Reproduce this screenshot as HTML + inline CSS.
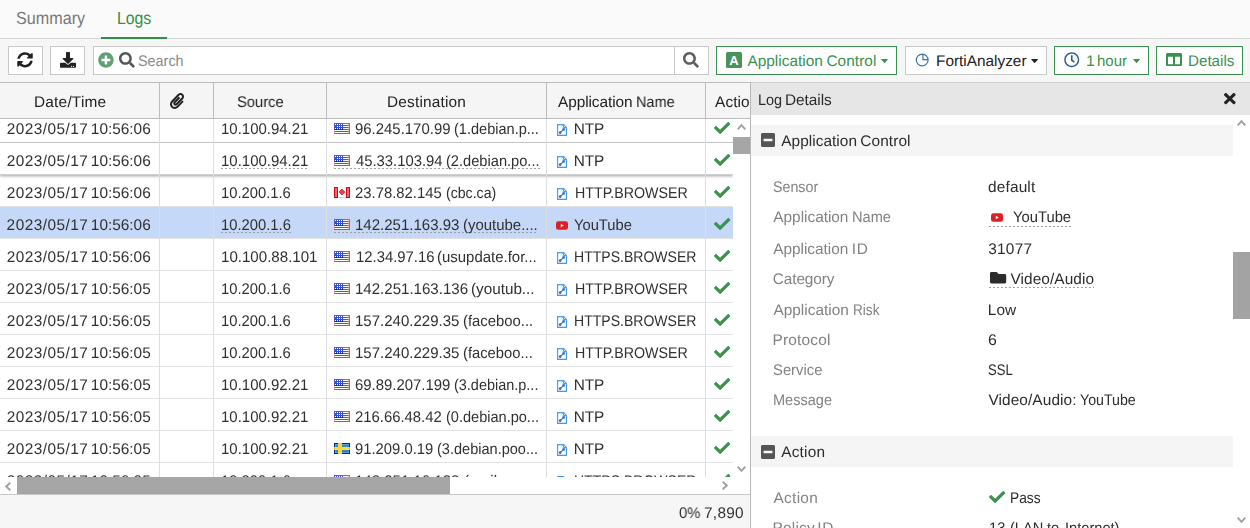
<!DOCTYPE html>
<html lang="en">
<head>
<meta charset="utf-8">
<title>Logs</title>
<style>
*{box-sizing:border-box;margin:0;padding:0}
html,body{width:1250px;height:528px;overflow:hidden}
body{background:#f6f6f6;font-family:"Liberation Sans",Arial,sans-serif;font-size:15.4px;text-rendering:geometricPrecision;color:#222;position:relative}
.abs{position:absolute}
.t{position:absolute;white-space:nowrap;line-height:20px;height:20px;transform-origin:0 0}
svg{display:block;overflow:visible}
/* tabs */
#tabbg{left:0;top:0;width:1250px;height:38px;background:#fafafa}
#tabline{left:0;top:38px;width:1250px;height:1px;background:#d4d4d4}
#tabul{left:101px;top:37px;width:66px;height:2px;background:#2f8f45}
.tab{font-size:17.5px}
/* toolbar */
.btn{position:absolute;top:46px;height:29px;background:#fff;border:1px solid #c8c8c8}
.btn.g{border-color:#3a9150}
.gr{color:#3a9150}
/* table */
#thead{left:0;top:82px;width:751px;height:37px;background:#f5f5f5;border-top:1px solid #bdbdbd;border-bottom:1px solid #bdbdbd}
.hsep{position:absolute;top:83px;width:1px;height:35px;background:#bdbdbd}
.gs{will-change:transform}
#tscroll{left:0;top:119px;width:750px;height:376px;background:#fff;border-bottom:1px solid #c9c9c9}
#tbody{left:0;top:119px;width:733px;height:358px;background:#fff;overflow:hidden;will-change:transform;color:#303030}
.row{position:absolute;left:0;width:733px;height:32px;border-bottom:1px solid #e1e1e1}
.row.sel{background:#c5d8f8}
.row.hov{box-shadow:0 -1px 0 #c6c6c6,0 1px 3px rgba(0,0,0,.38);z-index:4;background:#fff;border-bottom-color:#d0d0d0}
.vsep{position:absolute;top:0;width:1px;height:358px;background:#dedede;z-index:5}
.dl{position:absolute;height:1px;background:repeating-linear-gradient(90deg,#a0a0a0 0,#a0a0a0 2px,transparent 2px,transparent 4px)}
.sb{position:absolute;background:#a6a6a6}
/* panel */
#panel{left:750px;top:82px;width:500px;height:446px;background:#fff;border-left:1px solid #b8b8b8;overflow:hidden;will-change:transform;color:#2c2c2c}
#phead{left:0;top:0;width:500px;height:33px;background:#e6e6e6;border-top:1px solid #cfcfcf}
.sec{position:absolute;left:0;width:482px;height:31px;background:#f5f5f5}
.lbl{color:#828282}
</style>
</head>
<body>
<!-- tabs -->
<div class="abs" id="tabbg"></div>
<div class="abs" id="tabline"></div>
<div class="abs" id="tabul"></div>

<!-- toolbar -->
<div class="btn" style="left:8px;width:35px"></div>
<div class="btn" style="left:50px;width:35px"></div>
<div class="btn" style="left:93px;width:616px"></div>
<div class="abs" style="left:674px;top:47px;width:1px;height:27px;background:#c8c8c8"></div>
<div class="btn g" style="left:716px;width:181px"></div>
<div class="btn" style="left:905px;width:142px"></div>
<div class="btn g" style="left:1054px;width:95px"></div>
<div class="btn g" style="left:1156px;width:87px"></div>
<svg class="abs" style="left:17px;top:52.1px" width="16" height="15.7" viewBox="0 0 512 512" preserveAspectRatio="none"><path d="M370.72 133.28C339.458 104.008 298.888 87.962 255.848 88c-77.458.068-144.328 53.178-162.791 126.85-1.344 5.363-6.122 9.15-11.651 9.15H24.103c-7.498 0-13.194-6.807-11.807-14.176C33.933 94.924 134.813 8 256 8c66.448 0 126.791 26.136 171.315 68.685L463.03 40.97C478.149 25.851 504 36.559 504 57.941V192c0 13.255-10.745 24-24 24H345.941c-21.382 0-32.09-25.851-16.971-40.971l41.75-41.749zM32 296h134.059c21.382 0 32.09 25.851 16.971 40.971l-41.75 41.75c31.262 29.273 71.835 45.319 114.876 45.28 77.418-.07 144.315-53.144 162.787-126.849 1.344-5.363 6.122-9.15 11.651-9.15h57.304c7.498 0 13.194 6.807 11.807 14.176C478.067 417.076 377.187 504 256 504c-66.448 0-126.791-26.136-171.315-68.685L48.97 471.03C33.851 486.149 8 475.441 8 454.059V320c0-13.255 10.745-24 24-24z" fill="#222"/></svg>
<svg class="abs" style="left:60px;top:52.1px" width="16" height="15.8" viewBox="0 0 512 512" preserveAspectRatio="none"><path d="M216 0h80c13.3 0 24 10.7 24 24v168h87.7c17.8 0 26.7 21.5 14.1 34.1L269.7 378.3c-7.5 7.5-19.8 7.5-27.3 0L90.1 226.1c-12.6-12.6-3.7-34.1 14.1-34.1H192V24c0-13.3 10.7-24 24-24zm296 376v112c0 13.3-10.7 24-24 24H24c-13.3 0-24-10.7-24-24V376c0-13.3 10.7-24 24-24h146.7l49 49c20.1 20.1 52.5 20.1 72.6 0l49-49H488c13.3 0 24 10.7 24 24zm-124 88c0-11-9-20-20-20s-20 9-20 20 9 20 20 20 20-9 20-20zm64 0c0-11-9-20-20-20s-20 9-20 20 9 20 20 20 20-9 20-20z" fill="#222"/></svg>
<svg class="abs" style="left:98px;top:52px" width="15.9" height="15.9" viewBox="0 0 512 512" preserveAspectRatio="none"><path d="M256 8C119 8 8 119 8 256s111 248 248 248 248-111 248-248S393 8 256 8zm144 276c0 6.6-5.4 12-12 12h-92v92c0 6.6-5.4 12-12 12h-56c-6.6 0-12-5.4-12-12v-92h-92c-6.6 0-12-5.4-12-12v-56c0-6.6 5.4-12 12-12h92v-92c0-6.6 5.4-12 12-12h56c6.6 0 12 5.4 12 12v92h92c6.6 0 12 5.4 12 12v56z" fill="#5fa173"/></svg>
<svg class="abs" style="left:119.2px;top:52.1px" width="15.8" height="15.8" viewBox="0 0 512 512" preserveAspectRatio="none"><path d="M505 442.7L405.3 343c-4.5-4.5-10.6-7-17-7H372c27.6-35.3 44-79.7 44-128C416 93.1 322.9 0 208 0S0 93.1 0 208s93.1 208 208 208c48.3 0 92.7-16.4 128-44v16.3c0 6.4 2.5 12.5 7 17l99.7 99.7c9.4 9.4 24.6 9.4 33.9 0l28.3-28.3c9.4-9.4 9.4-24.6.1-34zM208 336c-70.7 0-128-57.2-128-128 0-70.7 57.2-128 128-128 70.7 0 128 57.2 128 128 0 70.7-57.2 128-128 128z" fill="#575757"/></svg>
<svg class="abs" style="left:683px;top:52.1px" width="15.9" height="15.8" viewBox="0 0 512 512" preserveAspectRatio="none"><path d="M505 442.7L405.3 343c-4.5-4.5-10.6-7-17-7H372c27.6-35.3 44-79.7 44-128C416 93.1 322.9 0 208 0S0 93.1 0 208s93.1 208 208 208c48.3 0 92.7-16.4 128-44v16.3c0 6.4 2.5 12.5 7 17l99.7 99.7c9.4 9.4 24.6 9.4 33.9 0l28.3-28.3c9.4-9.4 9.4-24.6.1-34zM208 336c-70.7 0-128-57.2-128-128 0-70.7 57.2-128 128-128 70.7 0 128 57.2 128 128 0 70.7-57.2 128-128 128z" fill="#5e5e5e"/></svg>
<div class="abs" style="left:726px;top:52px;width:16px;height:16px;background:#47935a;border-radius:1.5px"></div>
<span class="abs" style="left:726px;top:52px;width:16px;height:16px;line-height:17.5px;text-align:center;color:#fff;font-weight:bold;font-size:13px">A</span>
<svg class="abs" style="left:881.3px;top:59.2px" width="7" height="4" viewBox="0 0 10 6"><path d="M0.6 0 H9.4 Q10.3 0.3 9.7 1 L5.6 5.6 Q5 6.2 4.4 5.6 L0.3 1 Q-0.3 0.3 0.6 0 Z" fill="#3a9150"/></svg>
<svg class="abs" style="left:1031.4px;top:59.2px" width="7.2" height="4" viewBox="0 0 10 6"><path d="M0.6 0 H9.4 Q10.3 0.3 9.7 1 L5.6 5.6 Q5 6.2 4.4 5.6 L0.3 1 Q-0.3 0.3 0.6 0 Z" fill="#222"/></svg>
<svg class="abs" style="left:1133.2px;top:59.2px" width="7.2" height="4" viewBox="0 0 10 6"><path d="M0.6 0 H9.4 Q10.3 0.3 9.7 1 L5.6 5.6 Q5 6.2 4.4 5.6 L0.3 1 Q-0.3 0.3 0.6 0 Z" fill="#3a9150"/></svg>
<svg class="abs" style="left:915px;top:53px" width="14" height="14" viewBox="0 0 14 14"><g fill="none" stroke="#3572a5" stroke-width="1.15"><circle cx="7.2" cy="7" r="5.9"/><path d="M7.9 1.2 V6.6 H13"/></g></svg>
<svg class="abs" style="left:1064.1px;top:52.3px" width="15.5" height="15.4" viewBox="0 0 512 512" preserveAspectRatio="none"><path d="M256 8C119 8 8 119 8 256s111 248 248 248 248-111 248-248S393 8 256 8zm0 448c-110.5 0-200-89.5-200-200S145.5 56 256 56s200 89.5 200 200-89.5 200-200 200zm61.8-104.4l-84.9-61.7c-3.1-2.3-4.9-5.9-4.9-9.700V116c0-6.600 5.400-12 12-12h32c6.600 0 12 5.400 12 12v141.700l66.800 48.600c5.400 3.900 6.500 11.400 2.600 16.800L334.600 349c-3.900 5.300-11.400 6.500-16.800 2.600z" fill="#2a5d94"/></svg>
<svg class="abs" style="left:1166px;top:53.3px" width="16" height="13.1" viewBox="0 32 512 448" preserveAspectRatio="none"><path d="M464 32H48C21.49 32 0 53.49 0 80v352c0 26.51 21.49 48 48 48h416c26.51 0 48-21.49 48-48V80c0-26.51-21.49-48-48-48zM224 416H64V160h160v256zm224 0H288V160h160v256z" fill="#3a9150"/></svg>
<svg width="0" height="0" style="position:absolute" shape-rendering="crispEdges"><defs><symbol id="fus" viewBox="0 0 16 11"><rect x="0" y="0" width="9" height="1" fill="#5c5cb6"/><rect x="9" y="0" width="7" height="1" fill="#c9614b"/><rect x="0" y="1" width="1" height="1" fill="#5353b4"/><rect x="1" y="1" width="1" height="1" fill="#ffffff"/><rect x="2" y="1" width="1" height="1" fill="#4b57c9"/><rect x="3" y="1" width="1" height="1" fill="#ffffff"/><rect x="4" y="1" width="1" height="1" fill="#4b57c9"/><rect x="5" y="1" width="1" height="1" fill="#ffffff"/><rect x="6" y="1" width="1" height="1" fill="#4b57c9"/><rect x="7" y="1" width="1" height="1" fill="#ffffff"/><rect x="8" y="1" width="1" height="1" fill="#4b57c9"/><rect x="9" y="1" width="5" height="1" fill="#fdf3f3"/><rect x="14" y="1" width="1" height="1" fill="#f3c9c4"/><rect x="15" y="1" width="1" height="1" fill="#c9614b"/><rect x="0" y="2" width="1" height="1" fill="#5353b4"/><rect x="1" y="2" width="7" height="1" fill="#3f54cb"/><rect x="8" y="2" width="1" height="1" fill="#3a50c4"/><rect x="9" y="2" width="5" height="1" fill="#f2202e"/><rect x="14" y="2" width="1" height="1" fill="#ee6a6a"/><rect x="15" y="2" width="1" height="1" fill="#c9614b"/><rect x="0" y="3" width="1" height="1" fill="#5353b4"/><rect x="1" y="3" width="2" height="1" fill="#2f56d2"/><rect x="3" y="3" width="1" height="1" fill="#ffffff"/><rect x="4" y="3" width="1" height="1" fill="#2f56d2"/><rect x="5" y="3" width="1" height="1" fill="#ffffff"/><rect x="6" y="3" width="1" height="1" fill="#2f56d2"/><rect x="7" y="3" width="1" height="1" fill="#ffffff"/><rect x="8" y="3" width="1" height="1" fill="#2a4cc0"/><rect x="9" y="3" width="5" height="1" fill="#fdf3f3"/><rect x="14" y="3" width="1" height="1" fill="#f3c9c4"/><rect x="15" y="3" width="1" height="1" fill="#c9614b"/><rect x="0" y="4" width="1" height="1" fill="#5353b4"/><rect x="1" y="4" width="7" height="1" fill="#2450cd"/><rect x="8" y="4" width="1" height="1" fill="#1f45b8"/><rect x="9" y="4" width="5" height="1" fill="#f2202e"/><rect x="14" y="4" width="1" height="1" fill="#ee6a6a"/><rect x="15" y="4" width="1" height="1" fill="#c9614b"/><rect x="0" y="5" width="1" height="1" fill="#5353b4"/><rect x="1" y="5" width="1" height="1" fill="#ffffff"/><rect x="2" y="5" width="1" height="1" fill="#1847c6"/><rect x="3" y="5" width="1" height="1" fill="#ffffff"/><rect x="4" y="5" width="1" height="1" fill="#1847c6"/><rect x="5" y="5" width="1" height="1" fill="#ffffff"/><rect x="6" y="5" width="1" height="1" fill="#1847c6"/><rect x="7" y="5" width="1" height="1" fill="#ffffff"/><rect x="8" y="5" width="1" height="1" fill="#143cb0"/><rect x="9" y="5" width="5" height="1" fill="#fdf3f3"/><rect x="14" y="5" width="1" height="1" fill="#f3c9c4"/><rect x="15" y="5" width="1" height="1" fill="#c9614b"/><rect x="0" y="6" width="1" height="1" fill="#5353b4"/><rect x="1" y="6" width="7" height="1" fill="#123db9"/><rect x="8" y="6" width="1" height="1" fill="#1036a6"/><rect x="9" y="6" width="5" height="1" fill="#f2202e"/><rect x="14" y="6" width="1" height="1" fill="#ee6a6a"/><rect x="15" y="6" width="1" height="1" fill="#c9614b"/><rect x="0" y="7" width="1" height="1" fill="#f6b9b4"/><rect x="1" y="7" width="13" height="1" fill="#ffffff"/><rect x="14" y="7" width="1" height="1" fill="#f3c9c4"/><rect x="15" y="7" width="1" height="1" fill="#c9614b"/><rect x="0" y="8" width="1" height="1" fill="#ee6a6a"/><rect x="1" y="8" width="13" height="1" fill="#f2202e"/><rect x="14" y="8" width="1" height="1" fill="#ee6a6a"/><rect x="15" y="8" width="1" height="1" fill="#c9614b"/><rect x="0" y="9" width="1" height="1" fill="#f6b9b4"/><rect x="1" y="9" width="13" height="1" fill="#ffffff"/><rect x="14" y="9" width="1" height="1" fill="#f3c9c4"/><rect x="15" y="9" width="1" height="1" fill="#c9614b"/><rect x="0" y="10" width="16" height="1" fill="#c1533e"/></symbol><symbol id="fca" viewBox="0 0 16 11"><rect x="0" y="0" width="4" height="1" fill="#dc0714"/><rect x="4" y="0" width="8" height="1" fill="#f1f1f1"/><rect x="12" y="0" width="4" height="1" fill="#dc0714"/><rect x="0" y="1" width="1" height="1" fill="#dc0714"/><rect x="1" y="1" width="2" height="1" fill="#ec6a72"/><rect x="3" y="1" width="1" height="1" fill="#dc0714"/><rect x="4" y="1" width="8" height="1" fill="#ffffff"/><rect x="12" y="1" width="1" height="1" fill="#dc0714"/><rect x="13" y="1" width="2" height="1" fill="#ec6a72"/><rect x="15" y="1" width="1" height="1" fill="#dc0714"/><rect x="0" y="2" width="1" height="1" fill="#dc0714"/><rect x="1" y="2" width="2" height="1" fill="#ec6a72"/><rect x="3" y="2" width="1" height="1" fill="#dc0714"/><rect x="4" y="2" width="3" height="1" fill="#ffffff"/><rect x="7" y="2" width="2" height="1" fill="#e8414d"/><rect x="9" y="2" width="3" height="1" fill="#ffffff"/><rect x="12" y="2" width="1" height="1" fill="#dc0714"/><rect x="13" y="2" width="2" height="1" fill="#ec6a72"/><rect x="15" y="2" width="1" height="1" fill="#dc0714"/><rect x="0" y="3" width="1" height="1" fill="#dc0714"/><rect x="1" y="3" width="2" height="1" fill="#ec6a72"/><rect x="3" y="3" width="1" height="1" fill="#dc0714"/><rect x="4" y="3" width="2" height="1" fill="#ffffff"/><rect x="6" y="3" width="4" height="1" fill="#e8414d"/><rect x="10" y="3" width="2" height="1" fill="#ffffff"/><rect x="12" y="3" width="1" height="1" fill="#dc0714"/><rect x="13" y="3" width="2" height="1" fill="#ec6a72"/><rect x="15" y="3" width="1" height="1" fill="#dc0714"/><rect x="0" y="4" width="1" height="1" fill="#dc0714"/><rect x="1" y="4" width="2" height="1" fill="#ec6a72"/><rect x="3" y="4" width="1" height="1" fill="#dc0714"/><rect x="4" y="4" width="1" height="1" fill="#ffffff"/><rect x="5" y="4" width="6" height="1" fill="#e8414d"/><rect x="11" y="4" width="1" height="1" fill="#ffffff"/><rect x="12" y="4" width="1" height="1" fill="#dc0714"/><rect x="13" y="4" width="2" height="1" fill="#ec6a72"/><rect x="15" y="4" width="1" height="1" fill="#dc0714"/><rect x="0" y="5" width="1" height="1" fill="#dc0714"/><rect x="1" y="5" width="2" height="1" fill="#ec6a72"/><rect x="3" y="5" width="1" height="1" fill="#dc0714"/><rect x="4" y="5" width="1" height="1" fill="#ffffff"/><rect x="5" y="5" width="6" height="1" fill="#e8414d"/><rect x="11" y="5" width="1" height="1" fill="#ffffff"/><rect x="12" y="5" width="1" height="1" fill="#dc0714"/><rect x="13" y="5" width="2" height="1" fill="#ec6a72"/><rect x="15" y="5" width="1" height="1" fill="#dc0714"/><rect x="0" y="6" width="1" height="1" fill="#dc0714"/><rect x="1" y="6" width="2" height="1" fill="#ec6a72"/><rect x="3" y="6" width="1" height="1" fill="#dc0714"/><rect x="4" y="6" width="2" height="1" fill="#ffffff"/><rect x="6" y="6" width="4" height="1" fill="#e8414d"/><rect x="10" y="6" width="2" height="1" fill="#ffffff"/><rect x="12" y="6" width="1" height="1" fill="#dc0714"/><rect x="13" y="6" width="2" height="1" fill="#ec6a72"/><rect x="15" y="6" width="1" height="1" fill="#dc0714"/><rect x="0" y="7" width="1" height="1" fill="#dc0714"/><rect x="1" y="7" width="2" height="1" fill="#ec6a72"/><rect x="3" y="7" width="1" height="1" fill="#dc0714"/><rect x="4" y="7" width="3" height="1" fill="#ffffff"/><rect x="7" y="7" width="2" height="1" fill="#e8414d"/><rect x="9" y="7" width="3" height="1" fill="#ffffff"/><rect x="12" y="7" width="1" height="1" fill="#dc0714"/><rect x="13" y="7" width="2" height="1" fill="#ec6a72"/><rect x="15" y="7" width="1" height="1" fill="#dc0714"/><rect x="0" y="8" width="1" height="1" fill="#dc0714"/><rect x="1" y="8" width="2" height="1" fill="#ec6a72"/><rect x="3" y="8" width="1" height="1" fill="#dc0714"/><rect x="4" y="8" width="8" height="1" fill="#ffffff"/><rect x="12" y="8" width="1" height="1" fill="#dc0714"/><rect x="13" y="8" width="2" height="1" fill="#ec6a72"/><rect x="15" y="8" width="1" height="1" fill="#dc0714"/><rect x="0" y="9" width="1" height="1" fill="#dc0714"/><rect x="1" y="9" width="2" height="1" fill="#ec6a72"/><rect x="3" y="9" width="1" height="1" fill="#dc0714"/><rect x="4" y="9" width="8" height="1" fill="#ffffff"/><rect x="12" y="9" width="1" height="1" fill="#dc0714"/><rect x="13" y="9" width="2" height="1" fill="#ec6a72"/><rect x="15" y="9" width="1" height="1" fill="#dc0714"/><rect x="0" y="10" width="4" height="1" fill="#c80410"/><rect x="4" y="10" width="8" height="1" fill="#d4d4d4"/><rect x="12" y="10" width="4" height="1" fill="#c80410"/></symbol><symbol id="fse" viewBox="0 0 16 11"><rect x="0" y="0" width="4" height="1" fill="#0b2a80"/><rect x="4" y="0" width="1" height="1" fill="#f9b21e"/><rect x="5" y="0" width="2" height="1" fill="#ffd83a"/><rect x="7" y="0" width="1" height="1" fill="#f9b21e"/><rect x="8" y="0" width="8" height="1" fill="#0b2a80"/><rect x="0" y="1" width="1" height="1" fill="#0b2a80"/><rect x="1" y="1" width="3" height="1" fill="#5a9fd4"/><rect x="4" y="1" width="4" height="1" fill="#ffd83a"/><rect x="8" y="1" width="7" height="1" fill="#5a9fd4"/><rect x="15" y="1" width="1" height="1" fill="#0b2a80"/><rect x="0" y="2" width="1" height="1" fill="#0b2a80"/><rect x="1" y="2" width="1" height="1" fill="#5a9fd4"/><rect x="2" y="2" width="2" height="1" fill="#3a89c9"/><rect x="4" y="2" width="4" height="1" fill="#ffd83a"/><rect x="8" y="2" width="7" height="1" fill="#3a89c9"/><rect x="15" y="2" width="1" height="1" fill="#0b2a80"/><rect x="0" y="3" width="1" height="1" fill="#0b2a80"/><rect x="1" y="3" width="1" height="1" fill="#5a9fd4"/><rect x="2" y="3" width="2" height="1" fill="#3a89c9"/><rect x="4" y="3" width="4" height="1" fill="#ffd83a"/><rect x="8" y="3" width="7" height="1" fill="#3a89c9"/><rect x="15" y="3" width="1" height="1" fill="#0b2a80"/><rect x="0" y="4" width="1" height="1" fill="#f9b21e"/><rect x="1" y="4" width="14" height="1" fill="#ffd83a"/><rect x="15" y="4" width="1" height="1" fill="#f9b21e"/><rect x="0" y="5" width="1" height="1" fill="#f9b21e"/><rect x="1" y="5" width="14" height="1" fill="#ffd83a"/><rect x="15" y="5" width="1" height="1" fill="#f9b21e"/><rect x="0" y="6" width="1" height="1" fill="#f9b21e"/><rect x="1" y="6" width="14" height="1" fill="#ffd83a"/><rect x="15" y="6" width="1" height="1" fill="#f9b21e"/><rect x="0" y="7" width="1" height="1" fill="#0b2a80"/><rect x="1" y="7" width="1" height="1" fill="#5a9fd4"/><rect x="2" y="7" width="2" height="1" fill="#3a89c9"/><rect x="4" y="7" width="4" height="1" fill="#ffd83a"/><rect x="8" y="7" width="7" height="1" fill="#3a89c9"/><rect x="15" y="7" width="1" height="1" fill="#0b2a80"/><rect x="0" y="8" width="1" height="1" fill="#0b2a80"/><rect x="1" y="8" width="1" height="1" fill="#5a9fd4"/><rect x="2" y="8" width="2" height="1" fill="#2a78b8"/><rect x="4" y="8" width="4" height="1" fill="#ffd83a"/><rect x="8" y="8" width="6" height="1" fill="#2a78b8"/><rect x="14" y="8" width="1" height="1" fill="#5a9fd4"/><rect x="15" y="8" width="1" height="1" fill="#0b2a80"/><rect x="0" y="9" width="1" height="1" fill="#0b2a80"/><rect x="1" y="9" width="3" height="1" fill="#5a9fd4"/><rect x="4" y="9" width="4" height="1" fill="#ffd83a"/><rect x="8" y="9" width="7" height="1" fill="#5a9fd4"/><rect x="15" y="9" width="1" height="1" fill="#0b2a80"/><rect x="0" y="10" width="4" height="1" fill="#0b2a80"/><rect x="4" y="10" width="1" height="1" fill="#f9b21e"/><rect x="5" y="10" width="2" height="1" fill="#ffd83a"/><rect x="7" y="10" width="1" height="1" fill="#f9b21e"/><rect x="8" y="10" width="8" height="1" fill="#0b2a80"/></symbol></defs></svg>

<!-- table header -->
<div class="abs" id="thead"></div>
<div class="hsep" style="left:159px"></div>
<div class="hsep" style="left:213px"></div>
<div class="hsep" style="left:326px"></div>
<div class="hsep" style="left:546px"></div>
<div class="hsep" style="left:705px"></div>
<span class="t tab" id="tab1-0" style="left:15.63px;top:8px;transform:scaleX(0.9230);color:#777">Summary</span>
<span class="t tab" id="tab2-0" style="left:117.06px;top:8px;transform:scaleX(0.9026);color:#2f8f45">Logs</span>
<span class="t " id="search-0" style="left:137.84px;top:52px;transform:scaleX(0.9349);color:#8a8a8a">Search</span>
<span class="t gr" id="b_app-0" style="left:747.45px;top:52px;letter-spacing:0.012px;">Application</span> <span class="t gr" id="b_app-1" style="left:826.44px;top:52px;letter-spacing:0.048px;">Control</span>
<span class="t " id="b_faz-0" style="left:935.80px;top:52px;transform:scaleX(0.9986);">FortiAnalyzer</span>
<span class="t gr" id="b_hour-0" style="left:1085.83px;top:52px;transform:scaleX(1.0253);">1</span> <span class="t gr" id="b_hour-1" style="left:1096.58px;top:52px;transform:scaleX(0.9760);">hour</span>
<span class="t gr" id="b_det-0" style="left:1187.89px;top:52px;transform:scaleX(0.9849);">Details</span>
<span class="t gs" id="h_dt-0" style="left:33.62px;top:93px;letter-spacing:0.217px;">Date/Time</span>
<span class="t gs" id="h_src-0" style="left:236.76px;top:93px;transform:scaleX(0.9561);">Source</span>
<span class="t gs" id="h_dst-0" style="left:387.48px;top:93px;letter-spacing:0.183px;">Destination</span>
<span class="t gs" id="h_app-0" style="left:557.62px;top:93px;letter-spacing:-0.070px;">Application</span> <span class="t gs" id="h_app-1" style="left:636.32px;top:93px;transform:scaleX(0.9417);">Name</span>
<span class="t gs" id="h_act-0" style="left:714.61px;top:93px;letter-spacing:0.116px;">Actio</span>
<span class="t gs" id="foot-0" style="left:679.06px;top:504px;transform:scaleX(0.9645);color:#333">0%</span> <span class="t gs" id="foot-1" style="left:703.77px;top:504px;letter-spacing:0.288px;color:#333">7,890</span>
<svg class="abs" style="left:170px;top:93px" width="14" height="16" viewBox="0 0 448 512" preserveAspectRatio="none"><path d="M43.246 466.142c-58.43-60.289-57.341-157.511 1.386-217.581L254.392 34c44.316-45.332 116.351-45.336 160.671 0 43.89 44.894 43.943 117.329 0 162.276L232.214 383.128c-29.855 30.537-78.633 30.111-107.982-.998-28.275-29.97-27.368-77.473 1.452-106.953l143.743-146.835c6.182-6.314 16.312-6.422 22.626-.241l22.861 22.379c6.315 6.182 6.422 16.312.241 22.626L171.427 319.927c-4.932 5.045-5.236 13.428-.648 18.292 4.372 4.634 11.245 4.711 15.688.165l182.849-186.851c19.613-20.062 19.613-52.725-.011-72.798-19.189-19.627-49.957-19.637-69.154 0L90.39 293.295c-34.763 35.56-35.299 93.12-1.191 128.313 34.01 35.093 88.985 35.137 123.058.286l172.06-175.999c6.177-6.319 16.307-6.433 22.626-.256l22.877 22.364c6.319 6.177 6.434 16.307.256 22.626l-172.06 175.998c-59.576 60.938-155.943 60.216-214.77-.485z" fill="#222"/></svg>

<!-- table body -->
<div class="abs" id="tscroll"></div>
<div class="abs" id="tbody">
<div class="vsep" style="left:159px"></div>
<div class="vsep" style="left:213px"></div>
<div class="vsep" style="left:326px"></div>
<div class="vsep" style="left:546px"></div>
<div class="vsep" style="left:705px"></div>
<div class="row " style="top:-8px"><span class="t " id="r0_dt-0" style="left:6.84px;top:9px;letter-spacing:0.437px;">2023/05/17</span> <span class="t " id="r0_dt-1" style="left:90.82px;top:9px;letter-spacing:0.003px;">10:56:06</span><span class="t " id="r0_src-0" style="left:220.98px;top:9px;transform:scaleX(0.9724);">10.100.94.21</span><svg class="abs" style="left:334px;top:12px" width="16" height="11" shape-rendering="crispEdges"><use href="#fus"/></svg><span class="t " id="r0_dst-0" style="left:355.23px;top:9px;transform:scaleX(0.9702);">96.245.170.99</span> <span class="t " id="r0_dst-1" style="left:454.00px;top:9px;transform:scaleX(0.9448);">(1.debian.p...</span><svg class="abs" style="left:557px;top:13px" width="10" height="12" viewBox="0 0 10 12"><path d="M0.6 0.6 H6.6 L9.4 3.4 V11.4 H0.6 Z" fill="#fff" stroke="#3f9ae8" stroke-width="1.1"/><path d="M6.4 0.8 V3.6 H9.2" fill="none" stroke="#3f9ae8" stroke-width="1"/><path d="M3.1 8.7 L6.7 5.4" stroke="#2f7fd8" stroke-width="1.2"/><circle cx="3.1" cy="8.7" r="1.45" fill="#2f7fd8"/><circle cx="6.7" cy="5.4" r="1.45" fill="#2f7fd8"/></svg><span class="t " id="r0_app-0" style="left:573.73px;top:9px;letter-spacing:-0.109px;">NTP</span><svg class="abs" style="left:713.9px;top:10.9px" width="16.3" height="12" viewBox="0 65 512 382" preserveAspectRatio="none"><path d="M173.898 439.404l-166.4-166.4c-9.997-9.997-9.997-26.206 0-36.204l36.203-36.204c9.997-9.998 26.207-9.998 36.204 0L192 312.69 432.095 72.596c9.997-9.997 26.207-9.997 36.204 0l36.203 36.204c9.997 9.997 9.997 26.206 0 36.204l-294.4 294.401c-9.998 9.997-26.207 9.997-36.204-.001z" fill="#3a9150"/></svg></div>
<div class="row hov" style="top:24px"><span class="t " id="r1_dt-0" style="left:6.84px;top:9px;letter-spacing:0.437px;">2023/05/17</span> <span class="t " id="r1_dt-1" style="left:90.82px;top:9px;letter-spacing:0.003px;">10:56:06</span><span class="t " id="r1_src-0" style="left:220.98px;top:9px;transform:scaleX(0.9724);">10.100.94.21</span><span class="dl" style="left:221px;top:25px;width:88px"></span><span class="dl" style="left:334px;top:25px;width:206px"></span><svg class="abs" style="left:334px;top:12px" width="16" height="11" shape-rendering="crispEdges"><use href="#fus"/></svg><span class="t " id="r1_dst-0" style="left:355.65px;top:9px;transform:scaleX(0.9635);">45.33.103.94</span> <span class="t " id="r1_dst-1" style="left:445.65px;top:9px;transform:scaleX(0.9509);">(2.debian.po...</span><svg class="abs" style="left:557px;top:13px" width="10" height="12" viewBox="0 0 10 12"><path d="M0.6 0.6 H6.6 L9.4 3.4 V11.4 H0.6 Z" fill="#fff" stroke="#3f9ae8" stroke-width="1.1"/><path d="M6.4 0.8 V3.6 H9.2" fill="none" stroke="#3f9ae8" stroke-width="1"/><path d="M3.1 8.7 L6.7 5.4" stroke="#2f7fd8" stroke-width="1.2"/><circle cx="3.1" cy="8.7" r="1.45" fill="#2f7fd8"/><circle cx="6.7" cy="5.4" r="1.45" fill="#2f7fd8"/></svg><span class="t " id="r1_app-0" style="left:573.73px;top:9px;letter-spacing:-0.109px;">NTP</span><svg class="abs" style="left:713.9px;top:10.9px" width="16.3" height="12" viewBox="0 65 512 382" preserveAspectRatio="none"><path d="M173.898 439.404l-166.4-166.4c-9.997-9.997-9.997-26.206 0-36.204l36.203-36.204c9.997-9.998 26.207-9.998 36.204 0L192 312.69 432.095 72.596c9.997-9.997 26.207-9.997 36.204 0l36.203 36.204c9.997 9.997 9.997 26.206 0 36.204l-294.4 294.401c-9.998 9.997-26.207 9.997-36.204-.001z" fill="#3a9150"/></svg></div>
<div class="row " style="top:56px"><span class="t " id="r2_dt-0" style="left:6.84px;top:9px;letter-spacing:0.437px;">2023/05/17</span> <span class="t " id="r2_dt-1" style="left:90.82px;top:9px;letter-spacing:0.003px;">10:56:06</span><span class="t " id="r2_src-0" style="left:221.18px;top:9px;transform:scaleX(0.9601);">10.200.1.6</span><svg class="abs" style="left:334px;top:12px" width="16" height="11" shape-rendering="crispEdges"><use href="#fca"/></svg><span class="t " id="r2_dst-0" style="left:355.21px;top:9px;transform:scaleX(0.9653);">23.78.82.145</span> <span class="t " id="r2_dst-1" style="left:445.79px;top:9px;transform:scaleX(0.9171);">(cbc.ca)</span><svg class="abs" style="left:557px;top:13px" width="10" height="12" viewBox="0 0 10 12"><path d="M0.6 0.6 H6.6 L9.4 3.4 V11.4 H0.6 Z" fill="#fff" stroke="#3f9ae8" stroke-width="1.1"/><path d="M6.4 0.8 V3.6 H9.2" fill="none" stroke="#3f9ae8" stroke-width="1"/><path d="M3.1 8.7 L6.7 5.4" stroke="#2f7fd8" stroke-width="1.2"/><circle cx="3.1" cy="8.7" r="1.45" fill="#2f7fd8"/><circle cx="6.7" cy="5.4" r="1.45" fill="#2f7fd8"/></svg><span class="t " id="r2_app-0" style="left:574.68px;top:9px;transform:scaleX(0.9237);">HTTP.BROWSER</span><svg class="abs" style="left:713.9px;top:10.9px" width="16.3" height="12" viewBox="0 65 512 382" preserveAspectRatio="none"><path d="M173.898 439.404l-166.4-166.4c-9.997-9.997-9.997-26.206 0-36.204l36.203-36.204c9.997-9.998 26.207-9.998 36.204 0L192 312.69 432.095 72.596c9.997-9.997 26.207-9.997 36.204 0l36.203 36.204c9.997 9.997 9.997 26.206 0 36.204l-294.4 294.401c-9.998 9.997-26.207 9.997-36.204-.001z" fill="#3a9150"/></svg></div>
<div class="row sel" style="top:88px"><span class="t " id="r3_dt-0" style="left:6.61px;top:9px;letter-spacing:0.459px;">2023/05/17</span> <span class="t " id="r3_dt-1" style="left:90.82px;top:9px;letter-spacing:0.003px;">10:56:06</span><span class="t " id="r3_src-0" style="left:221.18px;top:9px;transform:scaleX(0.9605);">10.200.1.6</span><span class="dl" style="left:221px;top:25px;width:70px"></span><span class="dl" style="left:334px;top:25px;width:204px"></span><svg class="abs" style="left:334px;top:12px" width="16" height="11" shape-rendering="crispEdges"><use href="#fus"/></svg><span class="t " id="r3_dst-0" style="left:355.45px;top:9px;transform:scaleX(0.9755);">142.251.163.93</span> <span class="t " id="r3_dst-1" style="left:462.98px;top:9px;transform:scaleX(0.9708);">(youtube....</span><svg class="abs" style="left:556px;top:13.9px" width="12" height="9" viewBox="0 0 12 9"><rect x="0" y="0.2" width="12" height="8.6" rx="2.4" ry="2.4" fill="#dd1f26"/><path d="M4.8 2.7 L7.8 4.5 L4.8 6.3 Z" fill="#fff"/></svg><span class="t " id="r3_app-0" style="left:574.42px;top:9px;transform:scaleX(0.9560);">YouTube</span><svg class="abs" style="left:713.9px;top:10.9px" width="16.3" height="12" viewBox="0 65 512 382" preserveAspectRatio="none"><path d="M173.898 439.404l-166.4-166.4c-9.997-9.997-9.997-26.206 0-36.204l36.203-36.204c9.997-9.998 26.207-9.998 36.204 0L192 312.69 432.095 72.596c9.997-9.997 26.207-9.997 36.204 0l36.203 36.204c9.997 9.997 9.997 26.206 0 36.204l-294.4 294.401c-9.998 9.997-26.207 9.997-36.204-.001z" fill="#3a9150"/></svg></div>
<div class="row " style="top:120px"><span class="t " id="r4_dt-0" style="left:6.84px;top:9px;letter-spacing:0.437px;">2023/05/17</span> <span class="t " id="r4_dt-1" style="left:90.82px;top:9px;letter-spacing:0.003px;">10:56:06</span><span class="t " id="r4_src-0" style="left:220.84px;top:9px;transform:scaleX(0.9806);">10.100.88.101</span><svg class="abs" style="left:334px;top:12px" width="16" height="11" shape-rendering="crispEdges"><use href="#fus"/></svg><span class="t " id="r4_dst-0" style="left:355.64px;top:9px;transform:scaleX(0.9653);">12.34.97.16</span> <span class="t " id="r4_dst-1" style="left:436.60px;top:9px;transform:scaleX(0.9715);">(usupdate.for...</span><svg class="abs" style="left:557px;top:13px" width="10" height="12" viewBox="0 0 10 12"><path d="M0.6 0.6 H6.6 L9.4 3.4 V11.4 H0.6 Z" fill="#fff" stroke="#3f9ae8" stroke-width="1.1"/><path d="M6.4 0.8 V3.6 H9.2" fill="none" stroke="#3f9ae8" stroke-width="1"/><path d="M3.1 8.7 L6.7 5.4" stroke="#2f7fd8" stroke-width="1.2"/><circle cx="3.1" cy="8.7" r="1.45" fill="#2f7fd8"/><circle cx="6.7" cy="5.4" r="1.45" fill="#2f7fd8"/></svg><span class="t " id="r4_app-0" style="left:574.06px;top:9px;transform:scaleX(0.9116);">HTTPS.BROWSER</span><svg class="abs" style="left:713.9px;top:10.9px" width="16.3" height="12" viewBox="0 65 512 382" preserveAspectRatio="none"><path d="M173.898 439.404l-166.4-166.4c-9.997-9.997-9.997-26.206 0-36.204l36.203-36.204c9.997-9.998 26.207-9.998 36.204 0L192 312.69 432.095 72.596c9.997-9.997 26.207-9.997 36.204 0l36.203 36.204c9.997 9.997 9.997 26.206 0 36.204l-294.4 294.401c-9.998 9.997-26.207 9.997-36.204-.001z" fill="#3a9150"/></svg></div>
<div class="row " style="top:152px"><span class="t " id="r5_dt-0" style="left:6.84px;top:9px;letter-spacing:0.437px;">2023/05/17</span> <span class="t " id="r5_dt-1" style="left:90.82px;top:9px;letter-spacing:0.003px;">10:56:05</span><span class="t " id="r5_src-0" style="left:221.18px;top:9px;transform:scaleX(0.9601);">10.200.1.6</span><svg class="abs" style="left:334px;top:12px" width="16" height="11" shape-rendering="crispEdges"><use href="#fus"/></svg><span class="t " id="r5_dst-0" style="left:355.43px;top:9px;transform:scaleX(0.9784);">142.251.163.136</span> <span class="t " id="r5_dst-1" style="left:471.40px;top:9px;transform:scaleX(0.9909);">(youtub...</span><svg class="abs" style="left:557px;top:13px" width="10" height="12" viewBox="0 0 10 12"><path d="M0.6 0.6 H6.6 L9.4 3.4 V11.4 H0.6 Z" fill="#fff" stroke="#3f9ae8" stroke-width="1.1"/><path d="M6.4 0.8 V3.6 H9.2" fill="none" stroke="#3f9ae8" stroke-width="1"/><path d="M3.1 8.7 L6.7 5.4" stroke="#2f7fd8" stroke-width="1.2"/><circle cx="3.1" cy="8.7" r="1.45" fill="#2f7fd8"/><circle cx="6.7" cy="5.4" r="1.45" fill="#2f7fd8"/></svg><span class="t " id="r5_app-0" style="left:574.68px;top:9px;transform:scaleX(0.9237);">HTTP.BROWSER</span><svg class="abs" style="left:713.9px;top:10.9px" width="16.3" height="12" viewBox="0 65 512 382" preserveAspectRatio="none"><path d="M173.898 439.404l-166.4-166.4c-9.997-9.997-9.997-26.206 0-36.204l36.203-36.204c9.997-9.998 26.207-9.998 36.204 0L192 312.69 432.095 72.596c9.997-9.997 26.207-9.997 36.204 0l36.203 36.204c9.997 9.997 9.997 26.206 0 36.204l-294.4 294.401c-9.998 9.997-26.207 9.997-36.204-.001z" fill="#3a9150"/></svg></div>
<div class="row " style="top:184px"><span class="t " id="r6_dt-0" style="left:6.84px;top:9px;letter-spacing:0.437px;">2023/05/17</span> <span class="t " id="r6_dt-1" style="left:90.82px;top:9px;letter-spacing:0.003px;">10:56:05</span><span class="t " id="r6_src-0" style="left:221.18px;top:9px;transform:scaleX(0.9601);">10.200.1.6</span><svg class="abs" style="left:334px;top:12px" width="16" height="11" shape-rendering="crispEdges"><use href="#fus"/></svg><span class="t " id="r6_dst-0" style="left:355.44px;top:9px;transform:scaleX(0.9754);">157.240.229.35</span> <span class="t " id="r6_dst-1" style="left:463.01px;top:9px;transform:scaleX(0.9658);">(faceboo...</span><svg class="abs" style="left:557px;top:13px" width="10" height="12" viewBox="0 0 10 12"><path d="M0.6 0.6 H6.6 L9.4 3.4 V11.4 H0.6 Z" fill="#fff" stroke="#3f9ae8" stroke-width="1.1"/><path d="M6.4 0.8 V3.6 H9.2" fill="none" stroke="#3f9ae8" stroke-width="1"/><path d="M3.1 8.7 L6.7 5.4" stroke="#2f7fd8" stroke-width="1.2"/><circle cx="3.1" cy="8.7" r="1.45" fill="#2f7fd8"/><circle cx="6.7" cy="5.4" r="1.45" fill="#2f7fd8"/></svg><span class="t " id="r6_app-0" style="left:574.06px;top:9px;transform:scaleX(0.9116);">HTTPS.BROWSER</span><svg class="abs" style="left:713.9px;top:10.9px" width="16.3" height="12" viewBox="0 65 512 382" preserveAspectRatio="none"><path d="M173.898 439.404l-166.4-166.4c-9.997-9.997-9.997-26.206 0-36.204l36.203-36.204c9.997-9.998 26.207-9.998 36.204 0L192 312.69 432.095 72.596c9.997-9.997 26.207-9.997 36.204 0l36.203 36.204c9.997 9.997 9.997 26.206 0 36.204l-294.4 294.401c-9.998 9.997-26.207 9.997-36.204-.001z" fill="#3a9150"/></svg></div>
<div class="row " style="top:216px"><span class="t " id="r7_dt-0" style="left:6.84px;top:9px;letter-spacing:0.437px;">2023/05/17</span> <span class="t " id="r7_dt-1" style="left:90.82px;top:9px;letter-spacing:0.003px;">10:56:05</span><span class="t " id="r7_src-0" style="left:221.18px;top:9px;transform:scaleX(0.9601);">10.200.1.6</span><svg class="abs" style="left:334px;top:12px" width="16" height="11" shape-rendering="crispEdges"><use href="#fus"/></svg><span class="t " id="r7_dst-0" style="left:355.44px;top:9px;transform:scaleX(0.9754);">157.240.229.35</span> <span class="t " id="r7_dst-1" style="left:463.01px;top:9px;transform:scaleX(0.9594);">(faceboo...</span><svg class="abs" style="left:557px;top:13px" width="10" height="12" viewBox="0 0 10 12"><path d="M0.6 0.6 H6.6 L9.4 3.4 V11.4 H0.6 Z" fill="#fff" stroke="#3f9ae8" stroke-width="1.1"/><path d="M6.4 0.8 V3.6 H9.2" fill="none" stroke="#3f9ae8" stroke-width="1"/><path d="M3.1 8.7 L6.7 5.4" stroke="#2f7fd8" stroke-width="1.2"/><circle cx="3.1" cy="8.7" r="1.45" fill="#2f7fd8"/><circle cx="6.7" cy="5.4" r="1.45" fill="#2f7fd8"/></svg><span class="t " id="r7_app-0" style="left:574.68px;top:9px;transform:scaleX(0.9237);">HTTP.BROWSER</span><svg class="abs" style="left:713.9px;top:10.9px" width="16.3" height="12" viewBox="0 65 512 382" preserveAspectRatio="none"><path d="M173.898 439.404l-166.4-166.4c-9.997-9.997-9.997-26.206 0-36.204l36.203-36.204c9.997-9.998 26.207-9.998 36.204 0L192 312.69 432.095 72.596c9.997-9.997 26.207-9.997 36.204 0l36.203 36.204c9.997 9.997 9.997 26.206 0 36.204l-294.4 294.401c-9.998 9.997-26.207 9.997-36.204-.001z" fill="#3a9150"/></svg></div>
<div class="row " style="top:248px"><span class="t " id="r8_dt-0" style="left:6.84px;top:9px;letter-spacing:0.437px;">2023/05/17</span> <span class="t " id="r8_dt-1" style="left:90.82px;top:9px;letter-spacing:0.003px;">10:56:05</span><span class="t " id="r8_src-0" style="left:220.98px;top:9px;transform:scaleX(0.9724);">10.100.92.21</span><svg class="abs" style="left:334px;top:12px" width="16" height="11" shape-rendering="crispEdges"><use href="#fus"/></svg><span class="t " id="r8_dst-0" style="left:355.28px;top:9px;transform:scaleX(0.9690);">69.89.207.199</span> <span class="t " id="r8_dst-1" style="left:454.00px;top:9px;transform:scaleX(0.9394);">(3.debian.p...</span><svg class="abs" style="left:557px;top:13px" width="10" height="12" viewBox="0 0 10 12"><path d="M0.6 0.6 H6.6 L9.4 3.4 V11.4 H0.6 Z" fill="#fff" stroke="#3f9ae8" stroke-width="1.1"/><path d="M6.4 0.8 V3.6 H9.2" fill="none" stroke="#3f9ae8" stroke-width="1"/><path d="M3.1 8.7 L6.7 5.4" stroke="#2f7fd8" stroke-width="1.2"/><circle cx="3.1" cy="8.7" r="1.45" fill="#2f7fd8"/><circle cx="6.7" cy="5.4" r="1.45" fill="#2f7fd8"/></svg><span class="t " id="r8_app-0" style="left:573.73px;top:9px;letter-spacing:-0.109px;">NTP</span><svg class="abs" style="left:713.9px;top:10.9px" width="16.3" height="12" viewBox="0 65 512 382" preserveAspectRatio="none"><path d="M173.898 439.404l-166.4-166.4c-9.997-9.997-9.997-26.206 0-36.204l36.203-36.204c9.997-9.998 26.207-9.998 36.204 0L192 312.69 432.095 72.596c9.997-9.997 26.207-9.997 36.204 0l36.203 36.204c9.997 9.997 9.997 26.206 0 36.204l-294.4 294.401c-9.998 9.997-26.207 9.997-36.204-.001z" fill="#3a9150"/></svg></div>
<div class="row " style="top:280px"><span class="t " id="r9_dt-0" style="left:6.84px;top:9px;letter-spacing:0.437px;">2023/05/17</span> <span class="t " id="r9_dt-1" style="left:90.82px;top:9px;letter-spacing:0.003px;">10:56:05</span><span class="t " id="r9_src-0" style="left:220.98px;top:9px;transform:scaleX(0.9724);">10.100.92.21</span><svg class="abs" style="left:334px;top:12px" width="16" height="11" shape-rendering="crispEdges"><use href="#fus"/></svg><span class="t " id="r9_dst-0" style="left:355.18px;top:9px;transform:scaleX(0.9651);">216.66.48.42</span> <span class="t " id="r9_dst-1" style="left:445.80px;top:9px;transform:scaleX(0.9450);">(0.debian.po...</span><svg class="abs" style="left:557px;top:13px" width="10" height="12" viewBox="0 0 10 12"><path d="M0.6 0.6 H6.6 L9.4 3.4 V11.4 H0.6 Z" fill="#fff" stroke="#3f9ae8" stroke-width="1.1"/><path d="M6.4 0.8 V3.6 H9.2" fill="none" stroke="#3f9ae8" stroke-width="1"/><path d="M3.1 8.7 L6.7 5.4" stroke="#2f7fd8" stroke-width="1.2"/><circle cx="3.1" cy="8.7" r="1.45" fill="#2f7fd8"/><circle cx="6.7" cy="5.4" r="1.45" fill="#2f7fd8"/></svg><span class="t " id="r9_app-0" style="left:573.73px;top:9px;letter-spacing:-0.109px;">NTP</span><svg class="abs" style="left:713.9px;top:10.9px" width="16.3" height="12" viewBox="0 65 512 382" preserveAspectRatio="none"><path d="M173.898 439.404l-166.4-166.4c-9.997-9.997-9.997-26.206 0-36.204l36.203-36.204c9.997-9.998 26.207-9.998 36.204 0L192 312.69 432.095 72.596c9.997-9.997 26.207-9.997 36.204 0l36.203 36.204c9.997 9.997 9.997 26.206 0 36.204l-294.4 294.401c-9.998 9.997-26.207 9.997-36.204-.001z" fill="#3a9150"/></svg></div>
<div class="row " style="top:312px"><span class="t " id="r10_dt-0" style="left:6.84px;top:9px;letter-spacing:0.437px;">2023/05/17</span> <span class="t " id="r10_dt-1" style="left:90.82px;top:9px;letter-spacing:0.003px;">10:56:05</span><span class="t " id="r10_src-0" style="left:220.98px;top:9px;transform:scaleX(0.9724);">10.100.92.21</span><svg class="abs" style="left:334px;top:12px" width="16" height="11" shape-rendering="crispEdges"><use href="#fse"/></svg><span class="t " id="r10_dst-0" style="left:355.30px;top:9px;transform:scaleX(0.9623);">91.209.0.19</span> <span class="t " id="r10_dst-1" style="left:436.60px;top:9px;transform:scaleX(0.9447);">(3.debian.poo...</span><svg class="abs" style="left:557px;top:13px" width="10" height="12" viewBox="0 0 10 12"><path d="M0.6 0.6 H6.6 L9.4 3.4 V11.4 H0.6 Z" fill="#fff" stroke="#3f9ae8" stroke-width="1.1"/><path d="M6.4 0.8 V3.6 H9.2" fill="none" stroke="#3f9ae8" stroke-width="1"/><path d="M3.1 8.7 L6.7 5.4" stroke="#2f7fd8" stroke-width="1.2"/><circle cx="3.1" cy="8.7" r="1.45" fill="#2f7fd8"/><circle cx="6.7" cy="5.4" r="1.45" fill="#2f7fd8"/></svg><span class="t " id="r10_app-0" style="left:573.73px;top:9px;letter-spacing:-0.109px;">NTP</span><svg class="abs" style="left:713.9px;top:10.9px" width="16.3" height="12" viewBox="0 65 512 382" preserveAspectRatio="none"><path d="M173.898 439.404l-166.4-166.4c-9.997-9.997-9.997-26.206 0-36.204l36.203-36.204c9.997-9.998 26.207-9.998 36.204 0L192 312.69 432.095 72.596c9.997-9.997 26.207-9.997 36.204 0l36.203 36.204c9.997 9.997 9.997 26.206 0 36.204l-294.4 294.401c-9.998 9.997-26.207 9.997-36.204-.001z" fill="#3a9150"/></svg></div>
<div class="row " style="top:344px"><span class="t " id="r11_dt-0" style="left:6.84px;top:9px;letter-spacing:0.437px;">2023/05/17</span> <span class="t " id="r11_dt-1" style="left:90.82px;top:9px;letter-spacing:0.003px;">10:56:05</span><span class="t " id="r11_src-0" style="left:221.18px;top:9px;transform:scaleX(0.9601);">10.200.1.6</span><svg class="abs" style="left:334px;top:12px" width="16" height="11" shape-rendering="crispEdges"><use href="#fus"/></svg><span class="t " id="r11_dst-0" style="left:355.45px;top:9px;transform:scaleX(0.9755);">142.251.16.188</span> <span class="t " id="r11_dst-1" style="left:463.60px;top:9px;transform:scaleX(0.9909);">(mail.goog...</span><svg class="abs" style="left:557px;top:13px" width="10" height="12" viewBox="0 0 10 12"><path d="M0.6 0.6 H6.6 L9.4 3.4 V11.4 H0.6 Z" fill="#fff" stroke="#3f9ae8" stroke-width="1.1"/><path d="M6.4 0.8 V3.6 H9.2" fill="none" stroke="#3f9ae8" stroke-width="1"/><path d="M3.1 8.7 L6.7 5.4" stroke="#2f7fd8" stroke-width="1.2"/><circle cx="3.1" cy="8.7" r="1.45" fill="#2f7fd8"/><circle cx="6.7" cy="5.4" r="1.45" fill="#2f7fd8"/></svg><span class="t " id="r11_app-0" style="left:574.06px;top:9px;transform:scaleX(0.9116);">HTTPS.BROWSER</span><svg class="abs" style="left:713.9px;top:10.9px" width="16.3" height="12" viewBox="0 65 512 382" preserveAspectRatio="none"><path d="M173.898 439.404l-166.4-166.4c-9.997-9.997-9.997-26.206 0-36.204l36.203-36.204c9.997-9.998 26.207-9.998 36.204 0L192 312.69 432.095 72.596c9.997-9.997 26.207-9.997 36.204 0l36.203 36.204c9.997 9.997 9.997 26.206 0 36.204l-294.4 294.401c-9.998 9.997-26.207 9.997-36.204-.001z" fill="#3a9150"/></svg></div>
</div>
<!-- scrollbars -->
<div class="sb" style="left:733px;top:137px;width:17px;height:17px"></div>
<div class="sb" style="left:17px;top:477px;width:433px;height:17px"></div>

<!-- panel -->
<div class="abs" id="panel">
<div class="abs" id="phead"></div>
<div class="sec" style="top:43px"></div>
<svg class="abs" style="left:10px;top:51.3px" width="14" height="14" viewBox="0 32 448 448"><path d="M400 32H48C21.5 32 0 53.5 0 80v352c0 26.5 21.5 48 48 48h352c26.5 0 48-21.5 48-48V80c0-26.5-21.5-48-48-48zM92 296c-6.6 0-12-5.4-12-12v-56c0-6.6 5.4-12 12-12h264c6.6 0 12 5.4 12 12v56c0 6.6-5.4 12-12 12H92z" fill="#555"/></svg>
<span class="t " id="sec1-0" style="left:30.29px;top:50px;letter-spacing:0.040px;">Application</span> <span class="t " id="sec1-1" style="left:109.29px;top:50px;letter-spacing:0.101px;">Control</span>
<div class="sec" style="top:354px"></div>
<svg class="abs" style="left:10px;top:363px" width="14" height="14" viewBox="0 32 448 448"><path d="M400 32H48C21.5 32 0 53.5 0 80v352c0 26.5 21.5 48 48 48h352c26.5 0 48-21.5 48-48V80c0-26.5-21.5-48-48-48zM92 296c-6.6 0-12-5.4-12-12v-56c0-6.6 5.4-12 12-12h264c6.6 0 12 5.4 12 12v56c0 6.6-5.4 12-12 12H92z" fill="#555"/></svg>
<span class="t " id="sec2-0" style="left:30.23px;top:361px;letter-spacing:0.192px;">Action</span>
<span class="t lbl" id="f0_l-0" style="left:21.74px;top:96px;transform:scaleX(0.9256);">Sensor</span>
<span class="t " id="f0_v-0" style="left:237.12px;top:96px;letter-spacing:0.150px;">default</span>
<span class="t lbl" id="f1_l-0" style="left:22.35px;top:126px;letter-spacing:-0.022px;">Application</span> <span class="t lbl" id="f1_l-1" style="left:100.98px;top:126px;transform:scaleX(0.9484);">Name</span>
<svg class="abs" style="left:239.8px;top:131.3px" width="12" height="9" viewBox="0 0 12 9"><rect x="0" y="0.2" width="12" height="8.6" rx="2.4" ry="2.4" fill="#dd1f26"/><path d="M4.8 2.7 L7.8 4.5 L4.8 6.3 Z" fill="#fff"/></svg>
<span class="dl" style="left:238px;top:144px;width:82px"></span>
<span class="t " id="f1_v-0" style="left:262.42px;top:126px;transform:scaleX(0.9605);">YouTube</span>
<span class="t lbl" id="f2_l-0" style="left:22.30px;top:158px;letter-spacing:-0.035px;">Application</span> <span class="t lbl" id="f2_l-1" style="left:100.63px;top:158px;letter-spacing:0.752px;">ID</span>
<span class="t " id="f2_v-0" style="left:237.28px;top:158px;letter-spacing:0.240px;">31077</span>
<span class="t lbl" id="f3_l-0" style="left:21.79px;top:188px;letter-spacing:-0.107px;">Category</span>
<svg class="abs" style="left:238.8px;top:190px" width="16.2" height="11.4" viewBox="0 64 512 384" preserveAspectRatio="none"><path d="M464 128H272l-64-64H48C21.49 64 0 85.49 0 112v288c0 26.51 21.49 48 48 48h416c26.51 0 48-21.49 48-48V176c0-26.51-21.49-48-48-48z" fill="#2b2b2b"/></svg>
<span class="dl" style="left:238px;top:205px;width:105px"></span>
<span class="t " id="f3_v-0" style="left:259.53px;top:188px;letter-spacing:0.070px;">Video/Audio</span>
<span class="t lbl" id="f4_l-0" style="left:22.40px;top:219px;letter-spacing:0.021px;">Application</span> <span class="t lbl" id="f4_l-1" style="left:102.21px;top:219px;transform:scaleX(0.8853);">Risk</span>
<span class="t " id="f4_v-0" style="left:236.73px;top:219px;letter-spacing:0.121px;">Low</span>
<span class="t lbl" id="f5_l-0" style="left:21.52px;top:249px;letter-spacing:0.207px;">Protocol</span>
<span class="t " id="f5_v-0" style="left:236.80px;top:249px;transform:scaleX(1.0300);">6</span>
<span class="t lbl" id="f6_l-0" style="left:22.12px;top:279px;transform:scaleX(0.9622);">Service</span>
<span class="t " id="f6_v-0" style="left:237.13px;top:279px;transform:scaleX(0.8472);">SSL</span>
<span class="t lbl" id="f7_l-0" style="left:21.79px;top:309px;transform:scaleX(0.9450);">Message</span>
<span class="t " id="f7_v-0" style="left:237.45px;top:309px;letter-spacing:0.096px;">Video/Audio:</span> <span class="t " id="f7_v-1" style="left:328.57px;top:309px;transform:scaleX(0.9213);">YouTube</span>
<span class="t lbl" id="f8_l-0" style="left:22.56px;top:407px;letter-spacing:0.287px;">Action</span>
<svg class="abs" style="left:238.4px;top:409.3px" width="16.3" height="12" viewBox="0 65 512 382" preserveAspectRatio="none"><path d="M173.898 439.404l-166.4-166.4c-9.997-9.997-9.997-26.206 0-36.204l36.203-36.204c9.997-9.998 26.207-9.998 36.204 0L192 312.69 432.095 72.596c9.997-9.997 26.207-9.997 36.204 0l36.203 36.204c9.997 9.997 9.997 26.206 0 36.204l-294.4 294.401c-9.998 9.997-26.207 9.997-36.204-.001z" fill="#3a9150"/></svg>
<span class="t " id="f8_v-0" style="left:259.35px;top:407px;transform:scaleX(0.8925);">Pass</span>
<span class="t lbl" id="f9_l-0" style="left:21.52px;top:437px;letter-spacing:0.207px;">Policy</span> <span class="t lbl" id="f9_l-1" style="left:66.15px;top:437px;letter-spacing:0.752px;">ID</span>
<span class="t " id="f9_v-0" style="left:238.00px;top:437px;transform:scaleX(0.9500);">13</span> <span class="t " id="f9_v-1" style="left:259.03px;top:437px;transform:scaleX(0.9500);">(LAN</span> <span class="t " id="f9_v-2" style="left:296.09px;top:437px;transform:scaleX(0.9500);">to</span> <span class="t " id="f9_v-3" style="left:314.12px;top:437px;transform:scaleX(0.9500);">Internet)</span>
<span class="t " id="ph-0" style="left:7.18px;top:9px;transform:scaleX(0.9412);">Log</span> <span class="t " id="ph-1" style="left:34.03px;top:9px;letter-spacing:-0.062px;">Details</span>
</div>
<svg class="abs" style="left:737px;top:124px" width="9" height="6" viewBox="0 0 9 6"><path d="M0.7 5.3 L4.5 1.2 L8.3 5.3" fill="none" stroke="#a0a0a0" stroke-width="1.9"/></svg>
<svg class="abs" style="left:737px;top:465.8px" width="9" height="6" viewBox="0 0 9 6"><path d="M0.7 0.7 L4.5 4.8 L8.3 0.7" fill="none" stroke="#a0a0a0" stroke-width="1.9"/></svg>
<svg class="abs" style="left:4.5px;top:481.5px" width="6" height="9" viewBox="0 0 6 9"><path d="M5.3 0.7 L1.2 4.5 L5.3 8.3" fill="none" stroke="#a0a0a0" stroke-width="1.9"/></svg>
<svg class="abs" style="left:722.3px;top:481.3px" width="6" height="9" viewBox="0 0 6 9"><path d="M0.7 0.7 L4.8 4.5 L0.7 8.3" fill="none" stroke="#a0a0a0" stroke-width="1.9"/></svg>
<svg class="abs" style="left:1237px;top:120.2px" width="9" height="6" viewBox="0 0 9 6"><path d="M0.7 5.3 L4.5 1.2 L8.3 5.3" fill="none" stroke="#a0a0a0" stroke-width="1.9"/></svg>
<svg class="abs" style="left:1237px;top:517px" width="9" height="6" viewBox="0 0 9 6"><path d="M0.7 0.7 L4.5 4.8 L8.3 0.7" fill="none" stroke="#a0a0a0" stroke-width="1.9"/></svg>
<div class="sb" style="left:1233px;top:252px;width:17px;height:67px;background:#a3a3a3"></div>
<svg class="abs" style="left:1224.2px;top:93.4px" width="11.6" height="11.3" viewBox="0 80 352 352" preserveAspectRatio="none"><path d="M242.72 256l100.07-100.07c12.28-12.28 12.28-32.19 0-44.48l-22.24-22.24c-12.28-12.28-32.19-12.28-44.48 0L176 189.28 75.93 89.21c-12.28-12.28-32.19-12.28-44.48 0L9.21 111.45c-12.28 12.28-12.28 32.19 0 44.48L109.28 256 9.21 356.07c-12.28 12.28-12.28 32.19 0 44.48l22.24 22.24c12.28 12.28 32.2 12.28 44.48 0L176 322.72l100.07 100.07c12.28 12.28 32.2 12.28 44.48 0l22.24-22.24c12.28-12.28 12.28-32.19 0-44.48L242.72 256z" fill="#222"/></svg>
</body>
</html>
